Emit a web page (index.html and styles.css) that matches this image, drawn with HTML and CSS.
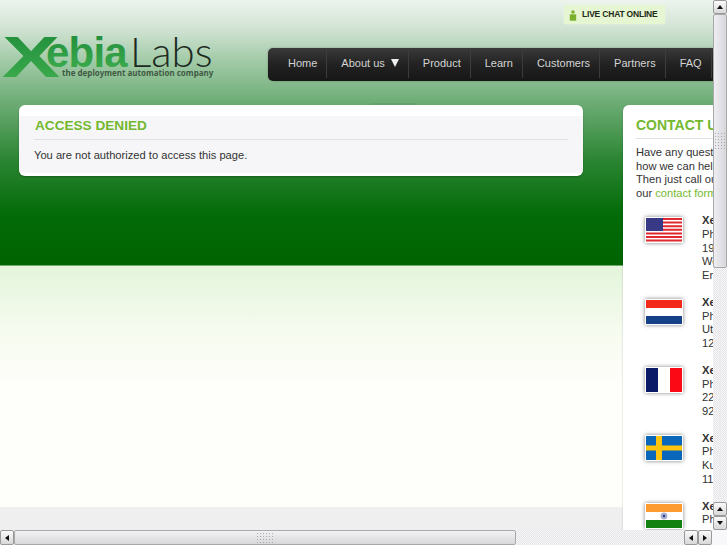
FILE: index.html
```html
<!DOCTYPE html>
<html lang="en">
<head>
  <meta charset="UTF-8" />
  <title>Access denied | XebiaLabs</title>
  <link rel="stylesheet" href="styles.css">
</head>
<body>
  <div class="window">
    <div class="viewport">
      <div class="page">

        <!-- Header -->
        <div class="header">
          <svg class="logo" width="215" height="50" viewBox="0 0 215 50">
            <defs>
              <linearGradient id="logo-green" x1="0" y1="0" x2="0" y2="1">
                <stop offset="0" stop-color="#1f8a3a" />
                <stop offset="1" stop-color="#3fb04f" />
              </linearGradient>
            </defs>
            <text class="logo-x" transform="translate(0 42) scale(1.5 1)" fill="url(#logo-green)">X</text>
            <text class="logo-ebia" x="44" y="32" fill="url(#logo-green)">ebia</text>
            <text class="logo-labs" x="128" y="32">Labs</text>
            <text class="logo-tag" x="60" y="41">the deployment automation company</text>
          </svg>
          <div class="header-right">
            <div class="chat-badge">
              <svg width="8" height="13" viewBox="0 0 10 14"><circle cx="5" cy="2.5" r="2.2" fill="#7ab02e" /><path d="M1 5.5h8v8H1z" fill="#7ab02e" /></svg>
              <span>LIVE CHAT ONLINE</span>
            </div>
            <ul class="nav">
              <li>Home</li>
              <li>About us <span class="arrow"></span></li>
              <li>Product</li>
              <li>Learn</li>
              <li>Customers</li>
              <li>Partners</li>
              <li>FAQ</li>
            </ul>
          </div>
        </div>

        <div class="tab-shadow"></div>

        <!-- Main columns -->
        <div class="columns">
          <div class="card main-card">
            <h2>ACCESS DENIED</h2>
            <p>You are not authorized to access this page.</p>
          </div>

          <div class="card side-card">
            <h2>CONTACT US</h2>
            <p class="intro">Have any questions or want to know<br>how we can help you?<br>Then just call our offices or use<br>our <a href="#">contact form</a></p>

            <div class="office">
              <svg class="flag" viewBox="0 0 36 24">
                <defs>
                  <pattern id="stars" width="2" height="2" patternUnits="userSpaceOnUse">
                    <rect width="2" height="2" fill="#2c2f80" />
                    <circle cx="1" cy="1" r="0.4" fill="#8f90c4" />
                  </pattern>
                </defs>
                <rect width="36" height="24" fill="#fff" />
                <path d="M0 0h36v2H0zM0 3.6h36v2H0zM0 7.2h36v2H0zM0 10.8h36v2H0zM0 14.4h36v2H0zM0 18h36v2H0zM0 21.6h36v2H0z" fill="#e0282e" />
                <rect width="17" height="13" fill="url(#stars)" />
              </svg>
              <div class="address"><b>XebiaLabs Inc.</b><br>Phone<br>19 Street<br>Wellesley<br>England</div>
            </div>

            <div class="office">
              <svg class="flag" viewBox="0 0 36 24">
                <rect width="36" height="24" fill="#fff" />
                <rect width="36" height="8" fill="#f22a1c" />
                <rect y="16" width="36" height="8" fill="#153f86" />
              </svg>
              <div class="address"><b>XebiaLabs BV</b><br>Phone<br>Utrecht<br>1200</div>
            </div>

            <div class="office">
              <svg class="flag" viewBox="0 0 36 24">
                <rect width="36" height="24" fill="#fff" />
                <rect width="12" height="24" fill="#0b1a66" />
                <rect x="24" width="12" height="24" fill="#fb0a16" />
              </svg>
              <div class="address"><b>XebiaLabs SARL</b><br>Phone<br>22 Rue<br>92000</div>
            </div>

            <div class="office">
              <svg class="flag" viewBox="0 0 36 24">
                <rect width="36" height="24" fill="#0a66b8" />
                <rect x="10" width="6" height="24" fill="#fcc40f" />
                <rect y="9.5" width="36" height="5" fill="#fcc40f" />
              </svg>
              <div class="address"><b>XebiaLabs AB</b><br>Phone<br>Kungsgatan<br>111</div>
            </div>

            <div class="office">
              <svg class="flag" viewBox="0 0 36 24">
                <rect width="36" height="24" fill="#fff" />
                <rect width="36" height="8" fill="#fd9a30" />
                <rect y="16" width="36" height="8" fill="#128112" />
                <circle cx="18" cy="12" r="3.4" fill="#aab0cc" />
                <circle cx="18" cy="12" r="1.2" fill="#2c3a90" />
              </svg>
              <div class="address"><b>XebiaLabs India</b><br>Phone</div>
            </div>
          </div>
        </div>
      </div>
    </div>

    <!-- Scrollbars -->
    <div class="vbar">
      <div class="sb-btn"><span class="tri tri-up"></span></div>
      <div class="vthumb"><span class="grip grip-v"></span></div>
      <div class="track"></div>
      <div class="sb-btn"><span class="tri tri-up"></span></div>
      <div class="sb-btn"><span class="tri tri-down"></span></div>
    </div>
    <div class="hbar">
      <div class="sb-btn"><span class="tri tri-left"></span></div>
      <div class="hthumb"><span class="grip grip-h"></span></div>
      <div class="track"></div>
      <div class="sb-btn"><span class="tri tri-left"></span></div>
      <div class="sb-btn"><span class="tri tri-right"></span></div>
    </div>
  </div>
</body>
</html>
```

FILE: styles.css
```css
html, body {
  margin: 0;
  height: 100%;
  overflow: hidden;
}

body {
  font-family: "Liberation Sans", Arial, sans-serif;
  font-size: 11.15px;
  line-height: 13.6px;
  color: #333;
}

.window {
  display: grid;
  grid-template-columns: 713px 14px;
  grid-template-rows: 530px 15px;
  width: 727px;
  height: 545px;
  background: #f8f8fa;
}

.viewport {
  overflow: hidden;
}

.page {
  position: relative;
  width: 1000px;
  height: 530px;
  background: linear-gradient(to bottom,
    #edf4ee 0,
    #cfe2d2 30px,
    #a3cba8 60px,
    #70ae78 100px,
    #2b8533 160px,
    #036b08 215px,
    #006400 265px,
    #e3f5db 266px,
    #f6fbef 330px,
    #fefefa 385px,
    #fefefb 507px,
    #efefef 507px);
}

/* Header */
.header {
  display: flex;
  height: 105px;
}

.logo {
  margin: 35px 0 0 2px;
  flex: none;
}

.logo-x {
  font: bold 58px "Liberation Sans", sans-serif;
}

.logo-ebia {
  font: bold 42px "Liberation Sans", sans-serif;
  letter-spacing: -0.8px;
}

.logo-labs {
  font: 300 42px "Lato", sans-serif;
  fill: #1d2a22;
}

.logo-tag {
  font: bold 8px "Noto Sans", sans-serif;
  fill: #3f5a44;
}

.header-right {
  margin-left: 51px;
  flex: 1;
}

.chat-badge {
  display: flex;
  align-items: center;
  gap: 5px;
  width: 96px;
  height: 18px;
  margin: 5px 0 24px 296px;
  padding: 1px 0 0 5px;
  background: #e6f5d2;
  border-radius: 2px;
  box-shadow: 0 0 2px #eef7df;
  font-size: 8.5px;
  font-weight: bold;
  letter-spacing: -0.2px;
  color: #1f2c18;
  white-space: nowrap;
}

.nav {
  display: flex;
  align-items: stretch;
  height: 33px;
  margin: 0;
  padding: 0 0 0 6px;
  list-style: none;
  background: linear-gradient(to bottom, #3a3a3a, #222 50%, #161616);
  border-radius: 5px 0 0 5px;
  box-shadow: 0 0 2px rgba(0, 0, 0, 0.3);
  font-size: 11px;
  line-height: 28px;
  color: #d4d4d4;
}

.nav li {
  padding: 0 9px 0 14px;
  border-right: 1px solid #3c3c3c;
  margin: 1px 0 3px;
}

.arrow {
  display: inline-block;
  margin-left: 3px;
  border-left: 4.5px solid transparent;
  border-right: 4.5px solid transparent;
  border-top: 8px solid #eee;
}

.tab-shadow {
  position: absolute;
  top: 103px;
  left: 370px;
  width: 46px;
  height: 2px;
  background: #64a36d;
}

/* Cards */
.columns {
  display: flex;
  align-items: flex-start;
  gap: 40px;
  padding-left: 19px;
}

.card {
  background: #f6f6f8;
  border-top: 11px solid #fff;
  border-bottom: 3px solid #fff;
  border-radius: 6px;
  box-shadow: 0 1px 2px rgba(0, 0, 0, 0.25);
  padding: 0 15px;
}

.card h2 {
  margin: 0;
  padding-bottom: 4px;
  border-bottom: 1px solid #e0e0e2;
  font-size: 13.6px;
  line-height: 19px;
  color: #73b82f;
}

.main-card {
  width: 534px;
  height: 57px;
}

.main-card h2 {
  padding-left: 1px;
}

.main-card p {
  margin: 9px 0 0;
}

.side-card {
  width: 330px;
  height: 460px;
  padding: 0 13px;
  background: #fff;
}

.side-card h2 {
  padding-bottom: 3px;
  font-size: 14px;
}

.intro {
  margin: 7px 0 14px;
}

.intro a {
  color: #73b82f;
  text-decoration: none;
}

.office {
  display: flex;
  gap: 19px;
  margin-bottom: 13.6px;
}

.flag {
  flex: none;
  width: 36px;
  height: 24px;
  margin: 3px 0 0 9px;
  border: 1px solid #fff;
  box-shadow: 0 0 4px rgba(0, 0, 0, 0.5);
}

/* Scrollbars */
.vbar, .hbar {
  display: flex;
  background: #f0f0f2;
}

.vbar {
  flex-direction: column;
}

.track {
  flex: 1;
  background: repeating-conic-gradient(#e4e4e6 0 25%, #f8f8fa 0 50%) 0 0 / 2px 2px;
}

.sb-btn {
  display: flex;
  align-items: center;
  justify-content: center;
  flex: none;
  width: 14px;
  height: 14px;
  box-sizing: border-box;
  background: linear-gradient(to bottom, #fafafa, #d8d8d8);
  border: 1px solid #9a9a9a;
  border-radius: 2px;
}

.hbar .sb-btn {
  height: 15px;
}

.hbar {
  grid-column: 1;
  width: 712px;
}

.vthumb, .hthumb {
  display: flex;
  align-items: center;
  justify-content: center;
  box-sizing: border-box;
  border: 1px solid #a8a8a8;
  border-radius: 2px;
}

.vthumb {
  height: 254px;
  background: linear-gradient(to right, #eeeef2, #d8d8dc);
}

.hthumb {
  width: 502px;
  background: linear-gradient(to bottom, #f2f2f4, #d8d8dc);
}

.grip {
  display: block;
  background: radial-gradient(circle, #aaa 0.7px, transparent 1px) 0 0 / 3px 3px;
}

.grip-v {
  width: 12px;
  height: 18px;
}

.grip-h {
  width: 18px;
  height: 12px;
}

.tri {
  width: 0;
  height: 0;
  border: 3px solid transparent;
}

.tri-up {
  border-top: 0;
  border-bottom: 4px solid #111;
}

.tri-down {
  border-bottom: 0;
  border-top: 4px solid #111;
}

.tri-left {
  border-left: 0;
  border-right: 4px solid #111;
}

.tri-right {
  border-right: 0;
  border-left: 4px solid #111;
}
```
